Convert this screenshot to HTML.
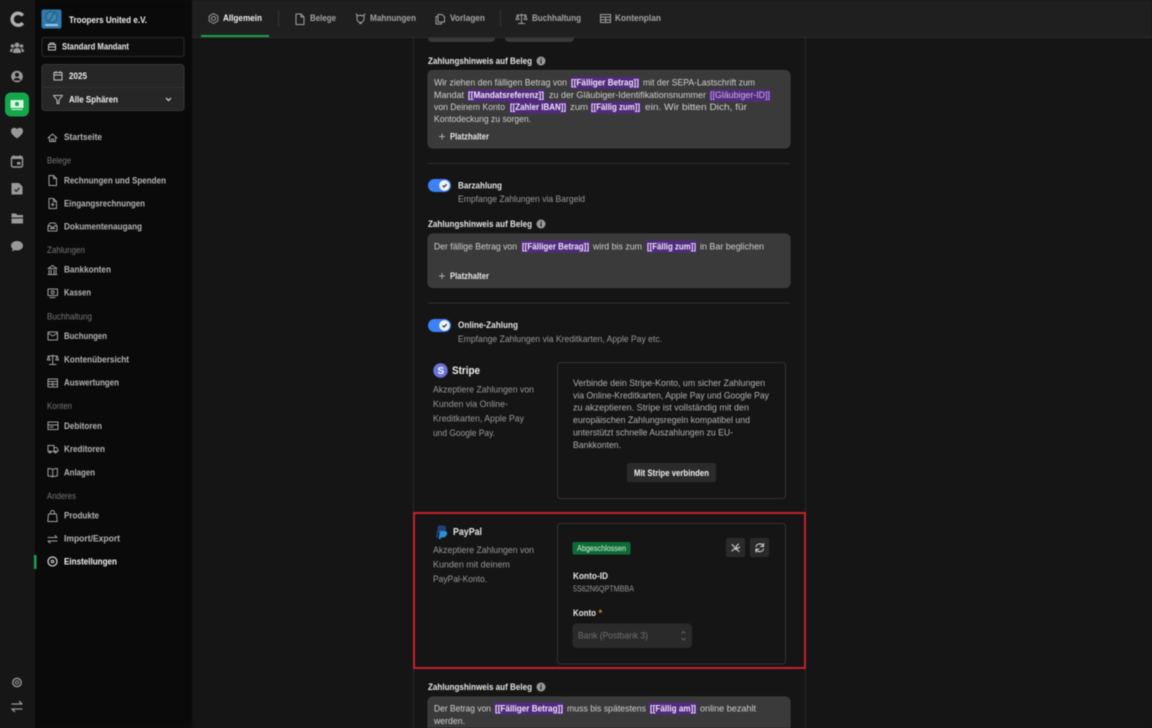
<!DOCTYPE html>
<html lang="de"><head><meta charset="utf-8"><title>Einstellungen</title>
<style>
html,body{margin:0;padding:0;background:#151515;width:1152px;height:728px;overflow:hidden}
svg{display:block;filter:blur(.5px)}
text{font-family:"Liberation Sans",sans-serif;font-size:9.5px;white-space:pre}
.b{font-weight:700}
.n{fill:#b4b4b4;font-weight:700;font-size:9.3px}
.g{fill:#777;font-size:8.8px}
.t{fill:#d0d0d0}
.m{fill:#999}
.l{fill:#e6e6e6;font-weight:700;font-size:9.3px}
.p{fill:#efe4fa;font-weight:700;font-size:9.3px}
.h{fill:#a4a4a4;font-weight:700;font-size:9.3px}
.i{fill:none;stroke:#a0a0a0;stroke-width:1;stroke-linecap:round;stroke-linejoin:round}
</style></head><body>
<svg width="1152" height="728" viewBox="0 0 1152 728" xmlns="http://www.w3.org/2000/svg">
<rect width="1152" height="728" fill="#151515"/>
<!-- content column -->
<line x1="413.5" y1="37" x2="413.5" y2="728" stroke="#292929"/>
<line x1="805.5" y1="37" x2="805.5" y2="728" stroke="#292929"/>
<rect x="428" y="28" width="67" height="14" rx="4" fill="#3a3a3a"/>
<rect x="505" y="28" width="69" height="14" rx="4" fill="#3a3a3a"/>
<!-- header -->
<rect x="192" y="0" width="960" height="37" fill="#1f1f1f"/>
<rect x="192" y="37" width="960" height="1" fill="#2b2b2b"/>
<rect x="201" y="35" width="68" height="2" fill="#16a34a"/>
<line x1="278.5" y1="10" x2="278.5" y2="27" stroke="#333"/>
<line x1="500.5" y1="10" x2="500.5" y2="27" stroke="#333"/>
<circle cx="213.500" cy="18.500" r="2" class="i"/><path class="i" d="M213.500 13.500l4.300 2.500v5l-4.300 2.500-4.300-2.500v-5z"/>
<text x="223" y="21" class="b" fill="#f0f0f0" textLength="39" lengthAdjust="spacingAndGlyphs">Allgemein</text>
<path class="i" d="M296 14h5l3 3v7.500h-8zM301 14v3h3"/>
<text x="310" y="21" class="h" textLength="26" lengthAdjust="spacingAndGlyphs">Belege</text>
<path class="i" d="M357 15c1 1 2 1 3.500 0 1.500 1 2.500 1 3.500 0v4c0 2-1 3-3.500 3.500-2.500-.5-3.500-1.500-3.500-3.500zM356 14l1 1M365 14l-1 1M359.500 23.500h2"/>
<text x="370" y="21" class="h" textLength="46" lengthAdjust="spacingAndGlyphs">Mahnungen</text>
<path class="i" d="M438 14.500h4l2.500 2.500v5h-6.500zM438 16.500h-2v7.500h5.500v-2"/>
<text x="450" y="21" class="h" textLength="35" lengthAdjust="spacingAndGlyphs">Vorlagen</text>
<path class="i" d="M521.500 14v9.500M518.500 23.500h6M517 15h9M517.500 15l-1.500 4.500h3zM525.500 15l-1.500 4.500h3z"/>
<text x="532" y="21" class="h" textLength="49" lengthAdjust="spacingAndGlyphs">Buchhaltung</text>
<path class="i" d="M600.500 14.500h10v8h-10zM600.500 17h10M605.500 17v5.500M600.500 19.700h10"/>
<text x="615" y="21" class="h" textLength="46" lengthAdjust="spacingAndGlyphs">Kontenplan</text>

<!-- rail -->
<rect x="0" y="0" width="35" height="728" fill="#161616"/>
<path d="M22.800 15.500a6 6 0 1 0 0 7.500" fill="none" stroke="#b0b0b0" stroke-width="3.400"/>
<g fill="#999"><circle cx="17" cy="45" r="2.400"/><circle cx="12.500" cy="46" r="1.800"/><circle cx="21.500" cy="46" r="1.800"/><path d="M13 53c0-3.500 1.500-5 4-5s4 1.500 4 5zM10 52c0-2 .5-3.500 2.500-3.500l1 .3c-1 .8-1.300 2-1.300 3.200zM24 52c0-2-.5-3.500-2.500-3.500l-1 .3c1 .8 1.300 2 1.300 3.200z"/></g>
<circle cx="17" cy="76.500" r="5.800" fill="#999"/><circle cx="17" cy="74.800" r="2" fill="#161616"/><path d="M13.500 80.500c.8-2 2-2.600 3.500-2.600s2.700.6 3.500 2.600z" fill="#161616"/>
<rect x="5" y="92.500" width="24" height="24" rx="6" fill="#14a84a"/>
<rect x="10.500" y="100" width="13" height="8" fill="#d8f5e2"/><circle cx="17" cy="104" r="2" fill="#14a84a"/><rect x="11.500" y="109" width="11" height="1" fill="#d8f5e2"/>
<path d="M17 138.500c-3-2.300-6-4.500-6-7.500 0-2 1.500-3.300 3.200-3.300 1.200 0 2.200.6 2.800 1.600.6-1 1.600-1.600 2.800-1.600 1.700 0 3.200 1.300 3.200 3.300 0 3-3 5.200-6 7.500z" fill="#999"/>
<rect x="11.500" y="157" width="11" height="10" rx="1.500" fill="none" stroke="#999" stroke-width="1.400"/><rect x="11.500" y="156" width="11" height="3" fill="#999"/><path d="M14 155v2M20 155v2" stroke="#999"/><rect x="17" y="162" width="3.500" height="2.500" fill="#999"/>
<path d="M11.500 183h7.500l3.500 3.500v8h-11z" fill="#999"/><path d="M14.500 189.500l1.800 1.800 3.200-3.500" fill="none" stroke="#161616" stroke-width="1.100"/>
<path d="M11.500 213.500h4.500l1.300 1.500h5.700v2.500h-11.500zM11.500 218.500h11.500v5h-11.500z" fill="#999"/>
<path d="M17 241c3.400 0 6 2 6 4.700s-2.600 4.700-6 4.700c-.8 0-1.500-.1-2.200-.3l-2.800 1.400.7-2.600c-1-.8-1.700-2-1.700-3.200 0-2.700 2.600-4.700 6-4.700z" fill="#999"/>
<circle cx="17" cy="682.500" r="5" fill="#8a8a8a"/><circle cx="17" cy="682.500" r="2.800" fill="none" stroke="#161616" stroke-width="1.200"/><circle cx="17" cy="682.500" r="1" fill="#161616"/>
<path d="M12 704h10l-2.500-2.500M22 709h-10l2.500 2.500" fill="none" stroke="#999" stroke-width="1.300" stroke-linecap="round" stroke-linejoin="round"/>

<!-- sidebar -->
<rect x="35" y="0" width="157" height="728" fill="#0a0a0a"/>
<rect x="41.500" y="9.500" width="20" height="19" rx="2" fill="#2f79ad"/>
<circle cx="51.500" cy="17" r="5.500" fill="#3f86a8" stroke="#1f5c8a"/><path d="M49 21l5-8" stroke="#1d4f78"/><rect x="45" y="24" width="13" height="2" fill="#9cc8dd"/>
<text x="69" y="23" class="b" fill="#f0f0f0" textLength="78" lengthAdjust="spacingAndGlyphs">Troopers United e.V.</text>
<rect x="42" y="37.500" width="142" height="19" rx="2" fill="#0d0d0d" stroke="#2c2c2c"/>
<path class="i" style="stroke:#c4c4c4" d="M48.500 44.500h7v5.500h-7zM50 44.500v-1.500h4v1.500M48.500 47h7"/>
<text x="62" y="49.500" class="b" fill="#e8e8e8" textLength="67" lengthAdjust="spacingAndGlyphs">Standard Mandant</text>
<rect x="42" y="64.500" width="142" height="46" rx="3" fill="#262626" stroke="#363636"/>
<line x1="42" y1="87.500" x2="184" y2="87.500" stroke="#333"/>
<path class="i" style="stroke:#c4c4c4" d="M54 72.500h8v7.500h-8zM54 75h8M56 71.500v1.500M60 71.500v1.500"/>
<text x="69" y="79" class="b" fill="#f0f0f0" textLength="18" lengthAdjust="spacingAndGlyphs">2025</text>
<path class="i" style="stroke:#c4c4c4" d="M53.500 95.500h9l-3.500 4.500v3.500h-2v-3.500z"/>
<text x="69" y="102.500" class="b" fill="#f0f0f0" textLength="49" lengthAdjust="spacingAndGlyphs">Alle Sphären</text>
<path d="M166 98l2.500 2.500 2.500-2.500" fill="none" stroke="#ddd" stroke-width="1.200"/>

<path class="i" d="M48 138l4.500-4 4.500 4M49.500 137v4.500h6v-4.500M51.500 141.500v-2.500h2v2.500"/>
<text x="64" y="140" class="n" textLength="38" lengthAdjust="spacingAndGlyphs">Startseite</text>
<text x="47" y="163.500" class="g" textLength="24" lengthAdjust="spacingAndGlyphs">Belege</text>
<path class="i" d="M49 175.500h4.500l3 3v7h-7.500zM53.500 175.500v3h3"/>
<text x="64" y="183.300" class="n" textLength="102" lengthAdjust="spacingAndGlyphs">Rechnungen und Spenden</text>
<path class="i" d="M49 198.500h4.500l3 3v7h-7.500zM53.500 198.500v3h3M52.700 203v3M51.200 204.500h3"/>
<text x="64" y="206.300" class="n" textLength="81" lengthAdjust="spacingAndGlyphs">Eingangsrechnungen</text>
<path class="i" d="M48 226l2-3h5l2 3v5h-9zM48 226h3l.5 1.500h2l.5-1.500h3M50 228.500h5"/>
<text x="64" y="229.300" class="n" textLength="78" lengthAdjust="spacingAndGlyphs">Dokumentenaugang</text>
<text x="47" y="253" class="g" textLength="38" lengthAdjust="spacingAndGlyphs">Zahlungen</text>
<path class="i" d="M48 268.500l4.500-3 4.500 3zM49 270v3.500M51 270v3.500M54 270v3.500M56 270v3.500M48 274.500h9"/>
<text x="64" y="272.500" class="n" textLength="47" lengthAdjust="spacingAndGlyphs">Bankkonten</text>
<path class="i" d="M48 289h9.500v6.500h-9.500zM50 297.500h5"/><circle class="i" cx="52.700" cy="292.200" r="1.500"/>
<text x="64" y="295.500" class="n" textLength="27" lengthAdjust="spacingAndGlyphs">Kassen</text>
<text x="47" y="319.500" class="g" textLength="45" lengthAdjust="spacingAndGlyphs">Buchhaltung</text>
<path class="i" d="M48 332h9.500v8h-9.500zM48 333l4.700 3 4.800-3"/>
<text x="64" y="339" class="n" textLength="43" lengthAdjust="spacingAndGlyphs">Buchungen</text>
<path class="i" d="M52.700 355v9M49.500 364.500h6.500M48 356h9.500M48.500 356l-1.200 4h2.800zM57 356l-1.200 4h2.800z"/>
<text x="64" y="362.500" class="n" textLength="65" lengthAdjust="spacingAndGlyphs">Kontenübersicht</text>
<path class="i" d="M48 379h9.500v8h-9.500zM48 381.500h9.500M52.700 381.500v5.500M48 384.300h9.500"/>
<text x="64" y="385.700" class="n" textLength="55" lengthAdjust="spacingAndGlyphs">Auswertungen</text>
<text x="47" y="409" class="g" textLength="25" lengthAdjust="spacingAndGlyphs">Konten</text>
<path class="i" d="M48 422h10v7.500h-10zM48 425h10M50 427h3"/>
<text x="64" y="429" class="n" textLength="38" lengthAdjust="spacingAndGlyphs">Debitoren</text>
<path class="i" d="M48 445.500h6v6h-6zM54 447.500h2.500l1.500 2v2h-4"/><circle class="i" cx="50" cy="452" r="1"/><circle class="i" cx="55.500" cy="452" r="1"/>
<text x="64" y="452" class="n" textLength="41" lengthAdjust="spacingAndGlyphs">Kreditoren</text>
<path class="i" d="M52.700 469.500v7.500M52.700 469.500c-1-.8-2.500-1-4.700-1v7.500c2.200 0 3.700.2 4.700 1 1-.8 2.500-1 4.700-1v-7.500c-2.200 0-3.700.2-4.700 1z"/>
<text x="64" y="475.300" class="n" textLength="31" lengthAdjust="spacingAndGlyphs">Anlagen</text>
<text x="47" y="499" class="g" textLength="29" lengthAdjust="spacingAndGlyphs">Anderes</text>
<path class="i" d="M48.500 514h8l.7 7.500h-9.400zM50.500 514v-1.500a2 2 0 0 1 4 0v1.500"/>
<text x="64" y="518.300" class="n" textLength="35" lengthAdjust="spacingAndGlyphs">Produkte</text>
<path class="i" d="M48 537.500h9l-2-2M57 541h-9l2 2"/>
<text x="64" y="541.300" class="n" textLength="56" lengthAdjust="spacingAndGlyphs">Import/Export</text>
<rect x="34" y="555" width="2.500" height="14" fill="#16a34a"/>
<circle cx="52.500" cy="561.500" r="4.500" fill="none" stroke="#d8d8d8" stroke-width="1.200"/><circle cx="52.500" cy="561.500" r="1.300" fill="none" stroke="#d8d8d8"/>
<text x="64" y="564.700" class="b" fill="#f5f5f5" textLength="53" lengthAdjust="spacingAndGlyphs">Einstellungen</text>

<!-- block 1 -->
<text x="428" y="64" class="l" textLength="104" lengthAdjust="spacingAndGlyphs">Zahlungshinweis auf Beleg</text>
<circle cx="541" cy="61" r="4.500" fill="#999"/><rect x="540.400" y="60" width="1.200" height="3.500" fill="#151515"/><rect x="540.400" y="58.300" width="1.200" height="1.100" fill="#151515"/>
<rect x="428" y="70.500" width="362" height="77.500" rx="5" fill="#3a3a3a" stroke="#404040"/>
<text x="434" y="85.700" class="t" textLength="133" lengthAdjust="spacingAndGlyphs">Wir ziehen den fälligen Betrag von</text>
<rect x="570" y="77" width="70" height="12" fill="#512a7e"/><text x="571" y="85.700" class="p" textLength="68" lengthAdjust="spacingAndGlyphs">[[Fälliger Betrag]]</text>
<text x="643" y="85.700" class="t" textLength="112" lengthAdjust="spacingAndGlyphs">mit der SEPA-Lastschrift zum</text>
<text x="434" y="98" class="t" textLength="30" lengthAdjust="spacingAndGlyphs">Mandat</text>
<rect x="467" y="89.500" width="78" height="12" fill="#512a7e"/><text x="468" y="98" class="p" textLength="76" lengthAdjust="spacingAndGlyphs">[[Mandatsreferenz]]</text>
<text x="549" y="98" class="t" textLength="157" lengthAdjust="spacingAndGlyphs">zu der Gläubiger-Identifikationsnummer</text>
<rect x="709" y="89.500" width="62" height="12" fill="#512a7e"/><text x="710" y="98" fill="#cbb6e3" textLength="60" lengthAdjust="spacingAndGlyphs">[[Gläubiger-ID]]</text>
<text x="434" y="110" class="t" textLength="71" lengthAdjust="spacingAndGlyphs">von Deinem Konto</text>
<rect x="509" y="101.500" width="58" height="12" fill="#512a7e"/><text x="510" y="110" class="p" textLength="56" lengthAdjust="spacingAndGlyphs">[[Zahler IBAN]]</text>
<text x="570" y="110" class="t" textLength="18" lengthAdjust="spacingAndGlyphs">zum</text>
<rect x="590" y="101.500" width="51" height="12" fill="#512a7e"/><text x="591" y="110" class="p" textLength="49" lengthAdjust="spacingAndGlyphs">[[Fällig zum]]</text>
<text x="645" y="110" class="t" textLength="102" lengthAdjust="spacingAndGlyphs">ein. Wir bitten Dich, für</text>
<text x="434" y="122" class="t" textLength="97" lengthAdjust="spacingAndGlyphs">Kontodeckung zu sorgen.</text>
<path d="M442 133.500v6M439 136.500h6" stroke="#aaa"/>
<text x="450" y="139.500" class="l" textLength="39" lengthAdjust="spacingAndGlyphs">Platzhalter</text>
<line x1="428" y1="163.500" x2="790" y2="163.500" stroke="#2f2f2f"/>

<!-- Barzahlung -->
<rect x="428" y="179" width="23" height="13" rx="6.500" fill="#3b82f6"/><circle cx="444.500" cy="185.500" r="5.300" fill="#f2f2f2"/><path d="M442.500 185.500l1.500 1.500 2.700-2.800" fill="none" stroke="#1f2f55" stroke-width="1.200"/>
<text x="458" y="188.500" class="l" textLength="44" lengthAdjust="spacingAndGlyphs">Barzahlung</text>
<text x="458" y="202" class="m" textLength="127" lengthAdjust="spacingAndGlyphs">Empfange Zahlungen via Bargeld</text>
<text x="428" y="227" class="l" textLength="104" lengthAdjust="spacingAndGlyphs">Zahlungshinweis auf Beleg</text>
<circle cx="541" cy="224" r="4.500" fill="#999"/><rect x="540.400" y="223" width="1.200" height="3.500" fill="#151515"/><rect x="540.400" y="221.300" width="1.200" height="1.100" fill="#151515"/>
<rect x="428" y="234" width="362" height="53.500" rx="5" fill="#3a3a3a" stroke="#404040"/>
<text x="434" y="249.500" class="t" textLength="83" lengthAdjust="spacingAndGlyphs">Der fällige Betrag von</text>
<rect x="521" y="240.500" width="69" height="12" fill="#512a7e"/><text x="522" y="249.500" class="p" textLength="67" lengthAdjust="spacingAndGlyphs">[[Fälliger Betrag]]</text>
<text x="593" y="249.500" class="t" textLength="49" lengthAdjust="spacingAndGlyphs">wird bis zum</text>
<rect x="646" y="240.500" width="51" height="12" fill="#512a7e"/><text x="647" y="249.500" class="p" textLength="49" lengthAdjust="spacingAndGlyphs">[[Fällig zum]]</text>
<text x="700" y="249.500" class="t" textLength="64" lengthAdjust="spacingAndGlyphs">in Bar beglichen</text>
<path d="M442 273v6M439 276h6" stroke="#aaa"/>
<text x="450" y="279" class="l" textLength="39" lengthAdjust="spacingAndGlyphs">Platzhalter</text>
<line x1="428" y1="303" x2="790" y2="303" stroke="#2f2f2f"/>

<!-- Online -->
<rect x="428" y="319" width="23" height="13" rx="6.500" fill="#3b82f6"/><circle cx="444.500" cy="325.500" r="5.300" fill="#f2f2f2"/><path d="M442.500 325.500l1.500 1.500 2.700-2.800" fill="none" stroke="#1f2f55" stroke-width="1.200"/>
<text x="458" y="328" class="l" textLength="60" lengthAdjust="spacingAndGlyphs">Online-Zahlung</text>
<text x="458" y="342" class="m" textLength="204" lengthAdjust="spacingAndGlyphs">Empfange Zahlungen via Kreditkarten, Apple Pay etc.</text>

<!-- Stripe -->
<circle cx="440.500" cy="370.500" r="7.200" fill="#6a72dc"/>
<text x="437.500" y="374" class="b" fill="#fff" style="font-size:10px">S</text>
<text x="452" y="374" class="b" fill="#f0f0f0" style="font-size:11px" textLength="28" lengthAdjust="spacingAndGlyphs">Stripe</text>
<text x="433" y="392.500" class="m" textLength="101" lengthAdjust="spacingAndGlyphs">Akzeptiere Zahlungen von</text>
<text x="433" y="407" class="m" textLength="75" lengthAdjust="spacingAndGlyphs">Kunden via Online-</text>
<text x="433" y="421.500" class="m" textLength="91" lengthAdjust="spacingAndGlyphs">Kreditkarten, Apple Pay</text>
<text x="433" y="436" class="m" textLength="62" lengthAdjust="spacingAndGlyphs">und Google Pay.</text>
<rect x="557.500" y="362.500" width="228" height="136" rx="3" fill="#151515" stroke="#333"/>
<g fill="#b0b0b0">
<text x="573" y="386" textLength="192" lengthAdjust="spacingAndGlyphs">Verbinde dein Stripe-Konto, um sicher Zahlungen</text>
<text x="573" y="398.500" textLength="196" lengthAdjust="spacingAndGlyphs">via Online-Kreditkarten, Apple Pay und Google Pay</text>
<text x="573" y="410.500" textLength="176" lengthAdjust="spacingAndGlyphs">zu akzeptieren. Stripe ist vollständig mit den</text>
<text x="573" y="423" textLength="177" lengthAdjust="spacingAndGlyphs">europäischen Zahlungsregeln kompatibel und</text>
<text x="573" y="435.500" textLength="160" lengthAdjust="spacingAndGlyphs">unterstützt schnelle Auszahlungen zu EU-</text>
<text x="573" y="448" textLength="48" lengthAdjust="spacingAndGlyphs">Bankkonten.</text>
</g>
<rect x="627" y="463" width="89" height="19" rx="2" fill="#2a2a2a"/>
<text x="634" y="476" class="b" fill="#f0f0f0" textLength="75" lengthAdjust="spacingAndGlyphs">Mit Stripe verbinden</text>

<!-- PayPal -->
<rect x="414" y="513" width="391" height="155" fill="none" stroke="#c7202b" stroke-width="2"/>
<path d="M436 537.500l2-12h5c2.500 0 3.500 1.500 3 3.500-.5 2.500-2.500 4-5 4h-2.500l-.8 4.500z" fill="#20407c"/>
<path d="M438.500 539l1.500-8h4.500c2 0 3 1 2.500 3-.5 2.300-2 3.500-4.500 3.500h-1.500l-.3 1.500z" fill="#2b8fd6"/>
<text x="453" y="535" class="b" fill="#e6e6e6" style="font-size:10px" textLength="29" lengthAdjust="spacingAndGlyphs">PayPal</text>
<text x="433" y="553" class="m" textLength="101" lengthAdjust="spacingAndGlyphs">Akzeptiere Zahlungen von</text>
<text x="433" y="567.500" class="m" textLength="77" lengthAdjust="spacingAndGlyphs">Kunden mit deinem</text>
<text x="433" y="582" class="m" textLength="54" lengthAdjust="spacingAndGlyphs">PayPal-Konto.</text>
<rect x="557.500" y="523.500" width="228" height="140.500" rx="3" fill="#151515" stroke="#333"/>
<rect x="572.500" y="542" width="58" height="12.500" rx="2" fill="#0f6b36"/>
<text x="577" y="551" fill="#d6f5e0" style="font-size:8px" textLength="49" lengthAdjust="spacingAndGlyphs">Abgeschlossen</text>
<rect x="726" y="538" width="19" height="19" rx="2" fill="#2a2a2a"/>
<rect x="750" y="538" width="19" height="19" rx="2" fill="#2a2a2a"/>
<path d="M732 544.500l7 7M738.500 544l-2 2a1.500 1.500 0 0 0 2 2l1-1M732 551l2-2a1.500 1.500 0 0 1 2 .5" fill="none" stroke="#cfcfcf" stroke-width="1.100" stroke-linecap="round"/>
<path d="M756 546.500a4 4 0 0 1 7-1l.5 1M763.500 549a4 4 0 0 1-7 1l-.5-1M763.500 543.500v3h-3M756 552v-3h3" fill="none" stroke="#cfcfcf" stroke-width="1.100" stroke-linecap="round"/>
<text x="573" y="579" class="l" textLength="35" lengthAdjust="spacingAndGlyphs">Konto-ID</text>
<text x="573" y="591.500" class="m" style="font-size:8px" textLength="61" lengthAdjust="spacingAndGlyphs">5S62N6QPTMBBA</text>
<text x="573" y="616" class="l" textLength="23" lengthAdjust="spacingAndGlyphs">Konto</text>
<text x="598.500" y="616" class="b" fill="#d9822b">*</text>
<rect x="572.500" y="623.500" width="119.500" height="24.500" rx="4" fill="#2a2a2a"/>
<text x="578" y="638.500" fill="#707070" textLength="70" lengthAdjust="spacingAndGlyphs">Bank (Postbank 3)</text>
<path d="M681.500 633.500l2-2 2 2M681.500 638l2 2 2-2" fill="none" stroke="#5f5f5f"/>

<!-- block 3 -->
<text x="428" y="690" class="l" textLength="104" lengthAdjust="spacingAndGlyphs">Zahlungshinweis auf Beleg</text>
<circle cx="541" cy="687" r="4.500" fill="#999"/><rect x="540.400" y="686" width="1.200" height="3.500" fill="#151515"/><rect x="540.400" y="684.300" width="1.200" height="1.100" fill="#151515"/>
<rect x="428" y="697" width="362" height="50" rx="5" fill="#3a3a3a" stroke="#404040"/>
<text x="434" y="711.500" class="t" textLength="57" lengthAdjust="spacingAndGlyphs">Der Betrag von</text>
<rect x="494" y="702.500" width="70" height="12" fill="#512a7e"/><text x="495" y="711.500" class="p" textLength="68" lengthAdjust="spacingAndGlyphs">[[Fälliger Betrag]]</text>
<text x="567" y="711.500" class="t" textLength="79" lengthAdjust="spacingAndGlyphs">muss bis spätestens</text>
<rect x="649" y="702.500" width="48" height="12" fill="#512a7e"/><text x="650" y="711.500" class="p" textLength="46" lengthAdjust="spacingAndGlyphs">[[Fällig am]]</text>
<text x="700" y="711.500" class="t" textLength="56" lengthAdjust="spacingAndGlyphs">online bezahlt</text>
<text x="434" y="724" class="t" textLength="31" lengthAdjust="spacingAndGlyphs">werden.</text>
</svg>
</body></html>
